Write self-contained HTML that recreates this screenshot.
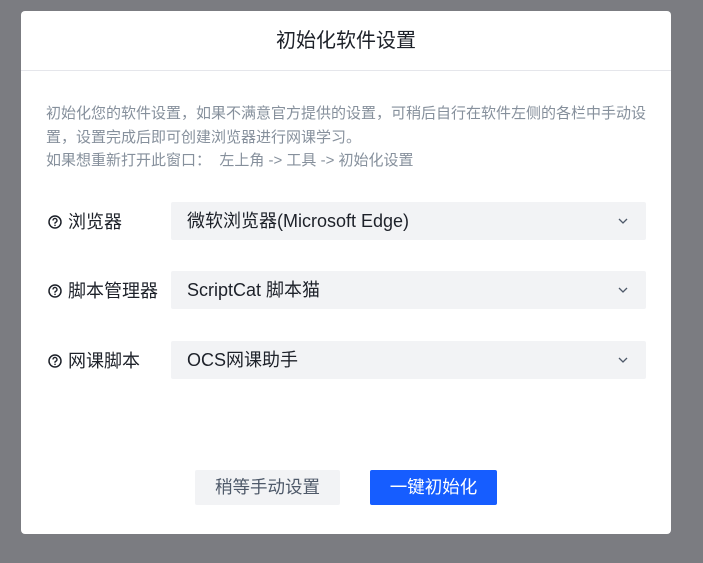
<!DOCTYPE html>
<html><head><meta charset="utf-8"><style>
body{margin:0;width:703px;height:563px;background:#7b7c81;font-family:"Liberation Sans","Noto Sans CJK SC",sans-serif;position:relative;overflow:hidden}
.m{position:absolute;left:21px;top:11px;width:650px;height:523px;background:#fff;border-radius:4px}
.h{height:59px;border-bottom:1px solid #e5e6eb;text-align:center;line-height:60px;font-size:20px;color:#1d2129}
.d{position:absolute;left:25px;top:91px;width:604px;font-size:15px;line-height:23.5px;color:#86909c}
.r{position:absolute;left:27px;height:38px;width:598px}
.l{position:absolute;left:0;top:1px;line-height:38px;font-size:18px;color:#1d2129}
.l svg{vertical-align:-1px;margin-right:6px}
.s{position:absolute;left:123px;top:0;width:475px;height:38px;background:#f2f3f5;border-radius:2px;font-size:18px;line-height:39px;color:#1d2129;box-sizing:border-box;padding-left:16px}
.s svg{position:absolute;right:18px;top:16px}
.b{position:absolute;top:459px;height:35px;line-height:35px;text-align:center;font-size:17.5px;border-radius:2px}
</style></head><body>
<div class="m">
<div class="h">初始化软件设置</div>
<div class="d">初始化您的软件设置，如果不满意官方提供的设置，可稍后自行在软件左侧的各栏中手动设置，设置完成后即可创建浏览器进行网课学习。<br>如果想重新打开此窗口：&nbsp; 左上角 -&gt; 工具 -&gt; 初始化设置</div>
<div class="r" style="top:191px"><div class="l"><svg width="14" height="14" viewBox="0 0 14 14"><circle cx="7" cy="7" r="6" fill="none" stroke="#1d2129" stroke-width="1.5"/><path d="M5 5.5a2 2 0 1 1 2.5 1.9c-.4.2-.5.5-.5.9v.5" fill="none" stroke="#1d2129" stroke-width="1.4"/><circle cx="7" cy="10.3" r=".8" fill="#1d2129"/></svg>浏览器</div><div class="s">微软浏览器(Microsoft Edge)<svg width="10" height="7" viewBox="0 0 10 7"><path d="M1 1l4 4 4-4" fill="none" stroke="#4e5969" stroke-width="1.3"/></svg></div></div>
<div class="r" style="top:260px"><div class="l"><svg width="14" height="14" viewBox="0 0 14 14"><circle cx="7" cy="7" r="6" fill="none" stroke="#1d2129" stroke-width="1.5"/><path d="M5 5.5a2 2 0 1 1 2.5 1.9c-.4.2-.5.5-.5.9v.5" fill="none" stroke="#1d2129" stroke-width="1.4"/><circle cx="7" cy="10.3" r=".8" fill="#1d2129"/></svg>脚本管理器</div><div class="s">ScriptCat 脚本猫<svg width="10" height="7" viewBox="0 0 10 7"><path d="M1 1l4 4 4-4" fill="none" stroke="#4e5969" stroke-width="1.3"/></svg></div></div>
<div class="r" style="top:330px"><div class="l"><svg width="14" height="14" viewBox="0 0 14 14"><circle cx="7" cy="7" r="6" fill="none" stroke="#1d2129" stroke-width="1.5"/><path d="M5 5.5a2 2 0 1 1 2.5 1.9c-.4.2-.5.5-.5.9v.5" fill="none" stroke="#1d2129" stroke-width="1.4"/><circle cx="7" cy="10.3" r=".8" fill="#1d2129"/></svg>网课脚本</div><div class="s">OCS网课助手<svg width="10" height="7" viewBox="0 0 10 7"><path d="M1 1l4 4 4-4" fill="none" stroke="#4e5969" stroke-width="1.3"/></svg></div></div>
<div class="b" style="left:174px;width:145px;background:#f2f3f5;color:#4e5969">稍等手动设置</div>
<div class="b" style="left:349px;width:127px;background:#165dff;color:#fff">一键初始化</div>
</div>
</body></html>
